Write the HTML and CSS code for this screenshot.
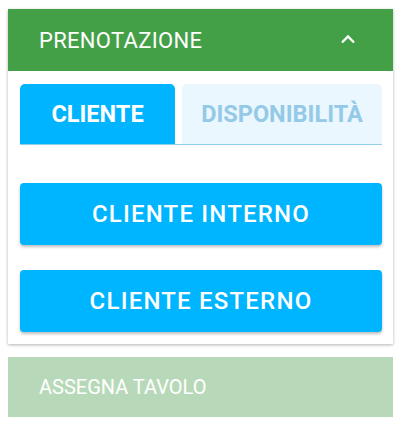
FILE: index.html
```html
<!DOCTYPE html>
<html>
<head>
<meta charset="utf-8">
<link rel="stylesheet" href="styles.css">
</head>
<body>
<div class="page">
  <section class="card">
    <header class="card-head">
      <span class="head-title">PRENOTAZIONE</span>
      <svg class="chev" width="16" height="10" viewBox="0 0 16 10"><path d="M2 8.5 L8 2.5 L14 8.5" fill="none" stroke="#fff" stroke-width="2.4"/></svg>
    </header>
    <div class="card-body">
      <div class="tabs">
        <div class="tab active">CLIENTE</div>
        <div class="tab">DISPONIBILITÀ</div>
      </div>
      <div class="actions">
        <button class="btn">CLIENTE INTERNO</button>
        <button class="btn">CLIENTE ESTERNO</button>
      </div>
    </div>
  </section>
  <section class="collapsed">
    <span class="collapsed-title">ASSEGNA TAVOLO</span>
  </section>
</div>
</body>
</html>
```
FILE: styles.css
```css
html, body { margin: 0; padding: 0; background: #fff; }
body { font-family: Roboto, "Liberation Sans", sans-serif; }
.page { padding: 9px 7px 0 8px; display: flex; flex-direction: column; gap: 13px; }
.card { background: #fff; box-shadow: 0 1px 3px rgba(0,0,0,0.3); }
.card-head {
  height: 62px; background: #43a047; color: #fff;
  display: flex; align-items: center; justify-content: space-between;
  padding: 0 37px 0 31px;
}
.head-title { font-size: 22px; font-weight: 400; letter-spacing: 0.3px; }
.chev { display: block; margin-top: -2px; }
.card-body { padding: 13px 11px 12px 12px; }
.tabs { display: flex; gap: 7px; border-bottom: 1px solid #8fcdea; height: 60px; }
.tab {
  display: flex; align-items: center; justify-content: center;
  font-size: 23.5px; font-weight: 700; border-radius: 5px 5px 0 0;
}
.tab.active { width: 155px; background: #00b4ff; color: #fff; }
.tab:not(.active) { flex: 1; background: #eaf7fe; color: #94c9e8; }
.actions { display: flex; flex-direction: column; gap: 25px; padding-top: 38px; }
.btn {
  height: 62px; border: 0; border-radius: 4px; background: #00b5ff; color: #fff;
  font-family: Roboto, "Liberation Sans", sans-serif; font-size: 24px; font-weight: 500;
  letter-spacing: 1.2px; box-shadow: 0 2px 3px rgba(0,0,0,0.25);
}
.collapsed {
  height: 60px; background: #b8d9b9; display: flex; align-items: center; padding-left: 31px;
}
.collapsed-title { color: #fff; font-size: 20px; }
```
